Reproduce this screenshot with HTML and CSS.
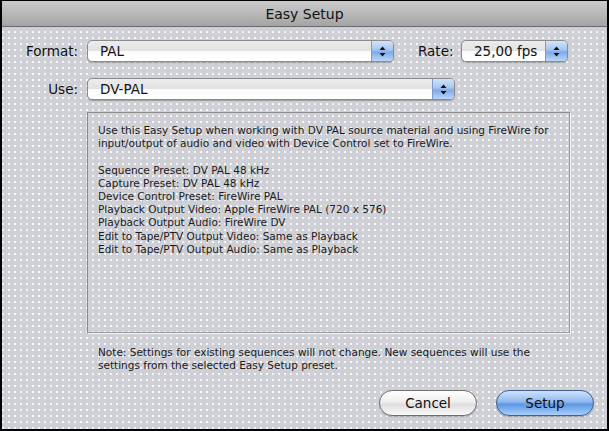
FILE: index.html
```html
<!DOCTYPE html>
<html>
<head>
<meta charset="utf-8">
<link rel="stylesheet" href="styles.css">
</head>
<body>
<div class="window">
  <div class="titlebar">Easy Setup</div>
  <div class="content">
    <div class="row">
      <div class="label">Format:</div>
      <div class="popup popup-format">
        <div class="popup-text">PAL</div>
        <div class="stepper"><svg width="7" height="11" viewBox="0 0 7 11"><path d="M3.5 0.5 L6.5 4 L0.5 4 Z" fill="#111"/><path d="M3.5 10.5 L6.5 7 L0.5 7 Z" fill="#111"/></svg></div>
      </div>
      <div class="label label-rate">Rate:</div>
      <div class="popup popup-rate">
        <div class="popup-text">25,00 fps</div>
        <div class="stepper"><svg width="7" height="11" viewBox="0 0 7 11"><path d="M3.5 0.5 L6.5 4 L0.5 4 Z" fill="#111"/><path d="M3.5 10.5 L6.5 7 L0.5 7 Z" fill="#111"/></svg></div>
      </div>
    </div>
    <div class="row row-use">
      <div class="label">Use:</div>
      <div class="popup popup-use">
        <div class="popup-text">DV-PAL</div>
        <div class="stepper"><svg width="7" height="11" viewBox="0 0 7 11"><path d="M3.5 0.5 L6.5 4 L0.5 4 Z" fill="#111"/><path d="M3.5 10.5 L6.5 7 L0.5 7 Z" fill="#111"/></svg></div>
      </div>
    </div>
    <div class="desc">
      <p>Use this Easy Setup when working with DV PAL source material and using FireWire for input/output of audio and video with Device Control set to FireWire.</p>
      <p>Sequence Preset: DV PAL 48 kHz<br>Capture Preset: DV PAL 48 kHz<br>Device Control Preset: FireWire PAL<br>Playback Output Video: Apple FireWire PAL (720 x 576)<br>Playback Output Audio: FireWire DV<br>Edit to Tape/PTV Output Video: Same as Playback<br>Edit to Tape/PTV Output Audio: Same as Playback</p>
    </div>
    <p class="note">Note: Settings for existing sequences will not change. New sequences will use the settings from the selected Easy Setup preset.</p>
    <div class="buttons">
      <div class="btn btn-cancel">Cancel</div>
      <div class="btn btn-setup">Setup</div>
    </div>
  </div>
</div>
</body>
</html>
```
FILE: styles.css
```css
html, body {
  margin: 0;
  padding: 0;
  background: #000;
}
.window {
  width: 609px;
  height: 431px;
  box-sizing: border-box;
  border: 2px solid #000;
  border-top: 1px solid #000;
  display: flex;
  flex-direction: column;
  font-family: "DejaVu Sans", Verdana, sans-serif;
  color: #111;
  background-color: #cfd0d5;
  background-image: radial-gradient(circle at 1px 1px, rgba(255,255,255,0.8) 0.7px, rgba(255,255,255,0) 1.1px);
  background-size: 6px 6px;
}
.titlebar {
  height: 25px;
  border-bottom: 1px solid #6a6a6a;
  background: linear-gradient(#cbcbcb, #b4b4b4 60%, #a4a4a4);
  text-align: center;
  font-size: 14px;
  line-height: 26px;
  color: #111;
}
.content {
  flex: 1;
  display: flex;
  flex-direction: column;
  padding: 13px 0 0 0;
}
.row {
  display: flex;
  align-items: center;
  height: 22px;
}
.row-use {
  margin-top: 16px;
}
.label {
  width: 76px;
  text-align: right;
  font-size: 13.5px;
  margin-right: 9px;
  color: #111;
}
.label-rate {
  width: 34px;
  margin-left: 24px;
}
.popup {
  display: flex;
  height: 22px;
  box-sizing: border-box;
  border: 1px solid #8b8b8b;
  border-radius: 5px;
  overflow: hidden;
  background: linear-gradient(#ececec, #e2e2e2 48%, #fbfbfb 52%, #ffffff);
  box-shadow: 0 1px 1px rgba(0,0,0,0.25);
}
.popup-format { width: 307px; }
.popup-rate { width: 107px; }
.popup-use { width: 368px; }
.popup-text {
  flex: 1;
  padding-left: 12px;
  font-size: 13.5px;
  line-height: 20px;
  color: #111;
}
.stepper {
  width: 21px;
  border-left: 1px solid #7d9ccc;
  background: linear-gradient(#d3e4fa, #a4c5f0 45%, #7faae6 55%, #b8d6fa);
  display: flex;
  align-items: center;
  justify-content: center;
}
.desc {
  margin: 12px 0 0 85px;
  width: 484px;
  height: 222px;
  box-sizing: border-box;
  border: 1px solid #8c8c8c;
  border-right-color: #f4f4f4;
  border-bottom-color: #f4f4f4;
  box-shadow: inset -1px -1px 0 #9a9a9a;
  padding: 11px 0 0 10px;
  font-size: 10.5px;
  line-height: 13.2px;
  color: #1a1a22;
}
.desc p {
  margin: 0 0 13.2px 0;
}
.note {
  margin: 12px 0 0 96px;
  width: 445px;
  font-size: 10.5px;
  line-height: 12.5px;
  color: #1a1a22;
}
.buttons {
  display: flex;
  justify-content: flex-end;
  gap: 19px;
  margin-top: 19px;
  padding-right: 13px;
}
.btn {
  width: 98px;
  height: 26px;
  box-sizing: border-box;
  border-radius: 13px;
  text-align: center;
  font-size: 13.5px;
  line-height: 24px;
  color: #111;
}
.btn-cancel {
  border: 1px solid #6f6f6f;
  background: linear-gradient(#ffffff, #eeeeee 45%, #dedede 55%, #f8f8f8);
  box-shadow: 0 1px 1px rgba(0,0,0,0.2);
}
.btn-setup {
  border: 1px solid #3f5f96;
  background: linear-gradient(#cfe2fb, #8fb9ef 45%, #5d97e3 55%, #a9d0fb);
  box-shadow: 0 1px 1px rgba(0,0,0,0.25);
}
```
